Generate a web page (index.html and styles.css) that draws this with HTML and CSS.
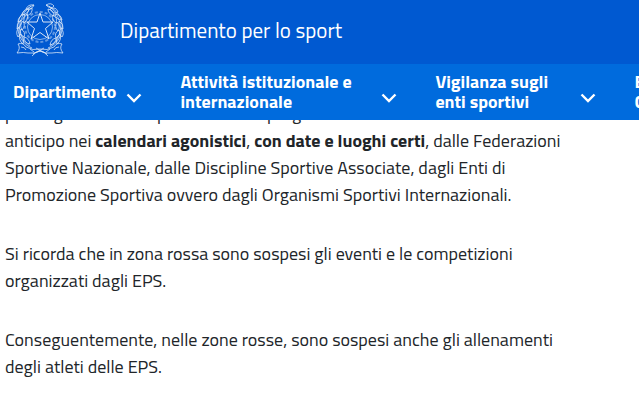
FILE: index.html
```html
<!DOCTYPE html>
<html lang="it">
<head>
    <meta charset="UTF-8">
    <meta name="viewport" content="width=device-width, initial-scale=1.0">
    <title>Dipartimento per lo sport</title>
    <link rel="stylesheet" href="styles.css">
</head>
<body>
    <header class="site-header">
        <div class="brand-bar">
            <svg class="emblem" viewBox="0 0 50 56" aria-hidden="true">
                <!-- ruota dentata -->
                <circle cx="25" cy="25" r="15" stroke-width="2" stroke-dasharray="3 2" opacity=".45"/>
                <circle cx="25" cy="25" r="12.500" opacity=".8"/>
                <!-- stella -->
                <path d="M25 11 L28 20 L38 20 L30.500 26.500 L34 37 L25 30.500 L16 37 L19.500 26.500 L12 20 L22 20 Z" class="star"/>
                <!-- rami di ulivo e quercia -->
                <path d="M19 3 C6 8 0 20 4 32 C6 38 10 43 17 46 M31 3 C44 8 50 20 46 32 C44 38 40 43 33 46"/>
                <path d="M19 3 q-6 -1 -8 4 q6 1 8 -4 M14 7 q-6 0 -7 6 q6 -1 7 -6 M10 12 q-7 2 -7 8 q6 -2 7 -8 M6 18 q-5 4 -4 9 q5 -3 4 -9 M4 25 q-4 5 -1 10 q4 -4 1 -10 M5 32 q-2 6 3 10 q2 -6 -3 -10 M17 6 q1 5 -5 8 q0 -6 5 -8 M12 12 q2 5 -3 9 q-1 -6 3 -9 M8 19 q3 5 -1 9 q-3 -5 1 -9 M6 27 q5 3 3 8 q-5 -3 -3 -8 M9 35 q5 1 6 7 q-6 -1 -6 -7"/>
                <path d="M31 3 q5 -3 8 1 q-3 4 -8 -1 M35 7 q6 -3 8 3 q-5 3 -8 -3 M40 12 q6 0 7 6 q-6 0 -7 -6 M44 19 q5 3 4 8 q-5 -2 -4 -8 M46 26 q4 5 1 9 q-4 -4 -1 -9 M45 32 q2 6 -3 10 q-2 -6 3 -10 M33 7 q0 5 6 7 q0 -6 -6 -7 M38 13 q-2 5 3 8 q2 -5 -3 -8 M42 20 q-3 5 1 9 q3 -5 -1 -9 M44 28 q-5 3 -3 8 q5 -3 3 -8 M41 36 q-5 1 -6 7 q6 -1 6 -7"/>
                <path d="M16 4 L9 11 L5 20 L4 29 L8 38 L15 44 M34 4 L41 11 L45 20 L46 29 L42 38 L35 44" opacity=".7"/>
                <!-- nastro -->
                <path d="M3 42 q5 -2 8 3 q7 4 14 2 q7 2 14 -2 q3 -5 8 -3 q-3 4 1 9 q-7 -1 -11 0 q-6 1 -12 -2 q-6 3 -12 2 q-4 -1 -11 0 q4 -5 1 -9 M6 45 q4 0 5 3 M44 45 q-4 0 -5 3 M15 47 l4 3 M35 47 l-4 3 M17 54 q3 -4 8 -5 q5 1 8 5 M18 52 L29 46 M32 52 L21 46"/>
            </svg>
            <span class="site-name">Dipartimento per lo sport</span>
        </div>
        <nav class="main-nav" aria-label="Menu principale">
            <button type="button" class="nav-item">
                <span>Dipartimento</span>
                <svg class="chevron" viewBox="0 0 16 10" aria-hidden="true"><path d="M1.500 1.500 L8 8 L14.500 1.500"/></svg>
            </button>
            <button type="button" class="nav-item nav-item-wide">
                <span>Attività istituzionale e internazionale</span>
                <svg class="chevron" viewBox="0 0 16 10" aria-hidden="true"><path d="M1.500 1.500 L8 8 L14.500 1.500"/></svg>
            </button>
            <button type="button" class="nav-item nav-item-medium">
                <span>Vigilanza sugli enti sportivi</span>
                <svg class="chevron" viewBox="0 0 16 10" aria-hidden="true"><path d="M1.500 1.500 L8 8 L14.500 1.500"/></svg>
            </button>
            <button type="button" class="nav-item nav-item-medium">
                <span>Emergenza Covid-19</span>
                <svg class="chevron" viewBox="0 0 16 10" aria-hidden="true"><path d="M1.500 1.500 L8 8 L14.500 1.500"/></svg>
            </button>
        </nav>
    </header>

    <main class="content">
        <p>prolungati o svolti a porte chiuse e programmati e inseriti con<br>
        anticipo nei <strong>calendari agonistici</strong>, <strong>con date e luoghi certi</strong>, dalle Federazioni<br>
        Sportive Nazionale, dalle Discipline Sportive Associate, dagli Enti di<br>
        Promozione Sportiva ovvero dagli Organismi Sportivi Internazionali.</p>

        <p>Si ricorda che in zona rossa sono sospesi gli eventi e le competizioni<br>
        organizzati dagli EPS.</p>

        <p>Conseguentemente, nelle zone rosse, sono sospesi anche gli allenamenti<br>
        degli atleti delle EPS.</p>
    </main>
</body>
</html>
```
FILE: styles.css
```css
* {
    margin: 0;
    padding: 0;
    box-sizing: border-box;
}

body {
    font-family: "Titillium Web", Lato, sans-serif;
    font-size: 18px;
    line-height: 27px;
    color: #212529;
    background: #fff;
    overflow-x: hidden;
}

.site-header {
    position: fixed;
    top: 0;
    left: 0;
    right: 0;
    overflow: hidden;
    color: #fff;
}

.brand-bar {
    display: flex;
    align-items: center;
    gap: 55px;
    height: 64px;
    padding: 0 15px 4px;
    background: #0059d1;
}

.emblem {
    width: 50px;
    height: 56px;
    fill: none;
    stroke: #fff;
    stroke-width: 0.8;
    opacity: 0.85;
}

.emblem .star {
    stroke-width: 1;
}

.site-name {
    font-size: 21px;
    font-weight: 500;
}

.main-nav {
    display: flex;
    height: 56px;
    background: #006bdd;
}

.nav-item {
    display: flex;
    flex: none;
    align-items: center;
    gap: 10px;
    padding: 0 25px 0 13px;
    border: 0;
    font: inherit;
    font-weight: 700;
    line-height: 20px;
    text-align: left;
    color: inherit;
    background: none;
    cursor: pointer;
}

.nav-item-wide span {
    width: 191px;
}

.nav-item-medium span {
    width: 135px;
}

.chevron {
    width: 16px;
    height: 10px;
    margin-top: 12px;
    fill: none;
    stroke: #fff;
    stroke-width: 2.4;
}

.content {
    padding: 100px 5px 0;
}

.content p {
    margin-bottom: 32px;
    white-space: nowrap;
}

.content p:last-child {
    margin-bottom: 0;
}
```
